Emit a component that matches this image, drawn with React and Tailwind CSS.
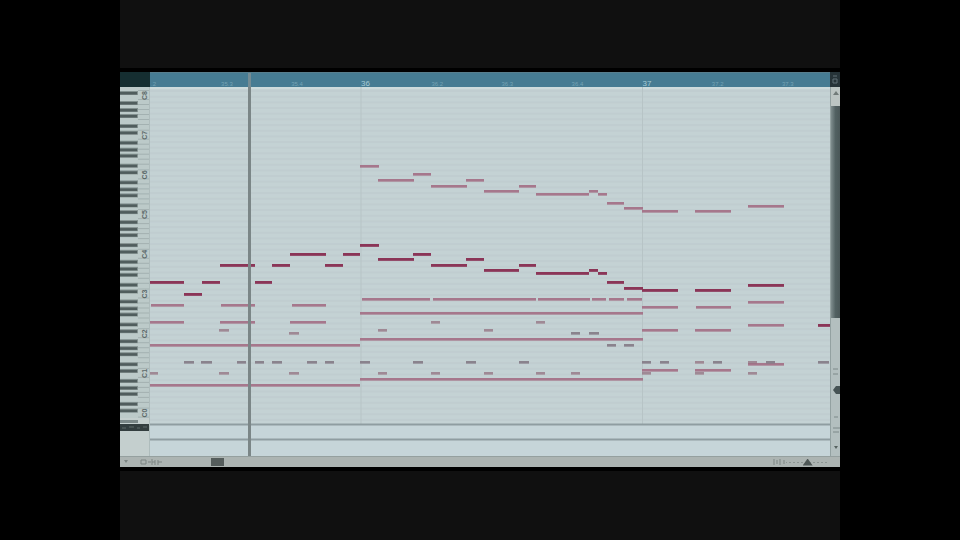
const STRONG = '#8b3456';
const SOFT = '#a46f86';
const MUTED = '#857c87';

// [x, y, width] in chart units
const melody = [
    [150, 282, 34], [184, 294, 18], [202, 282, 18], [220, 265, 35], [255, 282, 17], [272, 265, 18],
    [290, 254, 36], [325, 265, 18], [343, 254, 17], [360, 245, 19], [378, 259, 36], [413, 254, 18],
    [431, 265, 36], [466, 259, 18], [484, 270, 35], [519, 265, 17], [536, 273, 53], [589, 270, 9],
    [598, 273, 9], [607, 282, 17], [624, 288, 19], [642, 290, 36], [695, 290, 36], [748, 285, 36], [818, 325, 12],
];

const harmony = [
    [360, 166, 19], [378, 180, 36], [413, 174, 18], [431, 186, 36], [466, 180, 18], [484, 191, 35],
    [519, 186, 17], [536, 194, 53], [589, 191, 9], [598, 194, 9], [607, 203, 17], [624, 208, 19],
    [642, 211, 36], [695, 211, 36], [748, 206, 36],
    [151, 305, 33], [221, 305, 34], [292, 305, 34], [150, 322, 34], [220, 322, 35], [290, 322, 36],
    [362, 299, 68], [433, 299, 103], [538, 299, 52], [592, 299, 14], [609, 299, 15], [627, 299, 15],
    [642, 307, 36], [696, 307, 35], [748, 302, 36], [642, 330, 36], [695, 330, 36], [748, 325, 36],
    [642, 370, 36], [695, 370, 36], [748, 364, 36],
];

const bass = [
    [150, 345, 210], [150, 385, 210], [360, 313, 283], [360, 339, 283], [360, 379, 283],
];

const staccato = [
    [150, 373, 8], [219, 330, 10], [219, 373, 10], [289, 333, 10], [289, 373, 10],
    [378, 330, 9], [431, 322, 9], [484, 330, 9], [536, 322, 9], [378, 373, 9], [431, 373, 9],
    [484, 373, 9], [536, 373, 9], [571, 373, 9], [642, 373, 9], [695, 373, 9], [748, 373, 9],
    [695, 362, 9], [748, 362, 9],
];

const percussion = [
    [184, 362, 10], [201, 362, 11], [237, 362, 9], [255, 362, 9], [272, 362, 10], [307, 362, 10], [325, 362, 9],
    [360, 362, 10], [413, 362, 10], [466, 362, 10], [519, 362, 10], [571, 333, 9], [589, 333, 10],
    [607, 345, 9], [624, 345, 10], [642, 362, 9], [660, 362, 9], [713, 362, 9], [766, 362, 9], [818, 362, 11],
];

const ruler = [
    { bar: '', beat: '.2' },
    { bar: '', beat: '35.3' },
    { bar: '', beat: '35.4' },
    { bar: '36', beat: '' },
    { bar: '', beat: '36.2' },
    { bar: '', beat: '36.3' },
    { bar: '', beat: '36.4' },
    { bar: '37', beat: '' },
    { bar: '', beat: '37.2' },
    { bar: '', beat: '37.3' },
];

const octaves = ['C8', 'C7', 'C6', 'C5', 'C4', 'C3', 'C2', 'C1', 'C0'];
const OCTAVE = 39.7;

function Notes({ items, color, opacity = 1 }) {
    return items.map(([x, y, w]) => (
        <g key={`${x}-${y}`} fill={color} opacity={opacity}>
            <rect x={x} y={y - 1} width={w} height="3" opacity="0.6" />
            <rect x={x} y={y - 1} width={w} height="2" opacity="0.8" />
        </g>
    ));
}

function Keyboard() {
    return (
        <svg viewBox="120 87 30 369" preserveAspectRatio="none" className="w-[30px] h-full shrink-0 bg-[#bccac9]" role="img" aria-label="Piano keys">
            {octaves.map((name, o) => {
                const top = 93 + o * OCTAVE;
                const blacks = o === 8 ? [0] : [0, 10, 17, 23, 33];
                return (
                    <g key={name}>
                        {blacks.map(k => (
                            <g key={k}>
                                <rect x="120" y={top + k - 2} width="18" height="4" fill="#839190" />
                                <rect x="120" y={top + k - 1} width="17" height="2.500" fill="#505d5d" />
                            </g>
                        ))}
                        {[-3, 6, 11, 16, 21, 26, 31].map(k => (
                            <rect key={k} x="138" y={top + k} width="11" height="1" fill="#a3b1b1" />
                        ))}
                        <text transform={`translate(147 ${top + 7}) rotate(-90)`} fontSize="7" fontWeight="bold" fontFamily="Liberation Sans, sans-serif" fill="#5b6868">{name}</text>
                    </g>
                );
            })}
            <rect x="120" y="418" width="30" height="38" fill="#c4cfce" />
            <rect x="120" y="420" width="18" height="3" fill="#7c8989" />
            <rect x="120" y="424" width="30" height="7" fill="#333e3f" />
            <path d="M122 428h4m3-1h5m3 1h3m3-1h4" stroke="#5e6b6b" />
            <path d="M149.5 87v369" stroke="#aebcbc" />
        </svg>
    );
}

function PianoRoll() {
    const rows = Array.from({ length: 60 }, (_, i) => 90 + i * 5.67);
    return (
        <svg viewBox="150 87 680 369" preserveAspectRatio="none" className="flex-1 min-w-0 h-full bg-[#c4d2d4]" role="img" aria-label="Piano roll">
            <rect x="150" y="87" width="680" height="2" fill="#cddcdd" />
            {rows.map(y => <rect key={y} x="150" y={y} width="680" height="2" fill="#c0cdd0" />)}
            <path d="M361 87v369M642.500 87v369" stroke="#b7c4c6" />
            <rect x="150" y="425" width="680" height="31" fill="#c6d5d9" />
            <path d="M150 424.500h680M150 439.500h680" stroke="#8f9da1" strokeWidth="2" />
            <Notes items={bass} color={SOFT} />
            <Notes items={harmony} color={SOFT} />
            <Notes items={staccato} color="#94707f" opacity={0.8} />
            <Notes items={percussion} color={MUTED} />
            <Notes items={melody} color={STRONG} />
            <Notes items={melody} color={STRONG} />
            <rect x="248" y="87" width="3" height="369" fill="#7b8687" />
        </svg>
    );
}

function VerticalScroll() {
    return (
        <div className="w-[10px] h-full shrink-0 flex flex-col bg-[#b3bfbf] border-l border-[#93a1a1]">
            <button aria-label="Scroll up" className="h-[19px] shrink-0 flex justify-center pt-1 bg-[#bcc5c3]">
                <svg viewBox="0 0 6 4" className="w-[6px] h-[4px]"><path d="M0 4l3-4 3 4z" fill="#717b79" /></svg>
            </button>
            <div className="h-[57.5%] shrink-0 bg-linear-to-r from-[#7f8d8e] via-[#526162] to-[#4a5758]" />
            <div className="flex-1 min-h-0 flex flex-col items-center justify-end pb-1">
                <svg viewBox="0 0 8 90" className="w-[8px] h-[90px]">
                    <path d="M1 7h5M1 12h5M2 55h4M1 66h7M1 70h6" stroke="#7c8989" />
                    <path d="M1 28l3-4h4v8H4z" fill="#465354" />
                    <path d="M2 84h4l-2 3z" fill="#56615f" />
                </svg>
            </div>
        </div>
    );
}

export default function App() {
    return (
        <div className="h-screen bg-black flex justify-center overflow-hidden font-['Liberation_Sans',sans-serif]">
            <div className="w-3/4 h-full flex flex-col">
                <div className="h-[68px] shrink-0 bg-[#101010]" />
                <main className="flex-1 min-h-0 flex flex-col py-1 bg-black">
                    <header className="h-[15px] shrink-0 flex bg-[#467c93]">
                        <div className="w-[30px] shrink-0 bg-[#152e31]" />
                        <div className="flex-1 min-w-0 border-t border-[#587e8d]">
                            <svg viewBox="0 0 680 14" preserveAspectRatio="none" className="w-full h-full">
                                {ruler.map(({ bar, beat }, i) => (
                                    <text key={i} x={bar ? 211 + (i - 3) * 70.4 : 1 + i * 70.1} y="13" fontSize={bar ? 8 : 6} fill={bar ? '#a5cbd6' : '#74a3b3'}>{bar || beat}</text>
                                ))}
                                <rect x="98" width="3" height="14" fill="#748c94" />
                            </svg>
                        </div>
                        <div className="w-[10px] shrink-0 bg-[#263338] flex items-center justify-center">
                            <svg viewBox="0 0 8 12" className="w-[8px] h-[12px]"><path d="M2 2h4M2 5h4v4H2z" stroke="#607177" fill="none" /></svg>
                        </div>
                    </header>
                    <section className="flex-1 min-h-0 flex">
                        <Keyboard />
                        <PianoRoll />
                        <VerticalScroll />
                    </section>
                    <footer className="h-[11px] shrink-0 flex items-center bg-[#acb4b2] border-t border-[#95a09f] text-[#7c8583]">
                        <div className="w-[91px] shrink-0 pl-1">
                            <svg viewBox="0 0 44 8" className="w-[44px] h-[8px]">
                                <path d="M0 2h4l-2 3z" fill="currentColor" />
                                <path d="M17 2h5v4h-5zM24 4h3M28 1v6M31 2v5M28 4h3M34 2v5M34 4h4" stroke="currentColor" fill="none" />
                            </svg>
                        </div>
                        <button aria-label="Scroll position" className="w-[13px] h-[8px] bg-[#555d5c]" />
                        <div className="ml-auto flex items-center pr-3">
                            <svg viewBox="0 0 14 8" className="w-[14px] h-[8px]"><path d="M2 1v6M5 2v4M8 1v6M12 2v4" stroke="currentColor" /></svg>
                            <input
                                type="range"
                                aria-label="Zoom"
                                defaultValue="52"
                                className="w-[42px] h-[7px] appearance-none bg-[linear-gradient(to_right,#8c9593_50%,transparent_50%)] bg-[length:4px_1px] bg-repeat-x bg-center [&::-webkit-slider-thumb]:appearance-none [&::-webkit-slider-thumb]:w-[10px] [&::-webkit-slider-thumb]:h-[7px] [&::-webkit-slider-thumb]:bg-[#4e5756] [&::-webkit-slider-thumb]:[clip-path:polygon(50%_0,100%_100%,0_100%)]"
                            />
                        </div>
                    </footer>
                </main>
                <div className="h-[69px] shrink-0 bg-[#101010]" />
            </div>
        </div>
    );
}
